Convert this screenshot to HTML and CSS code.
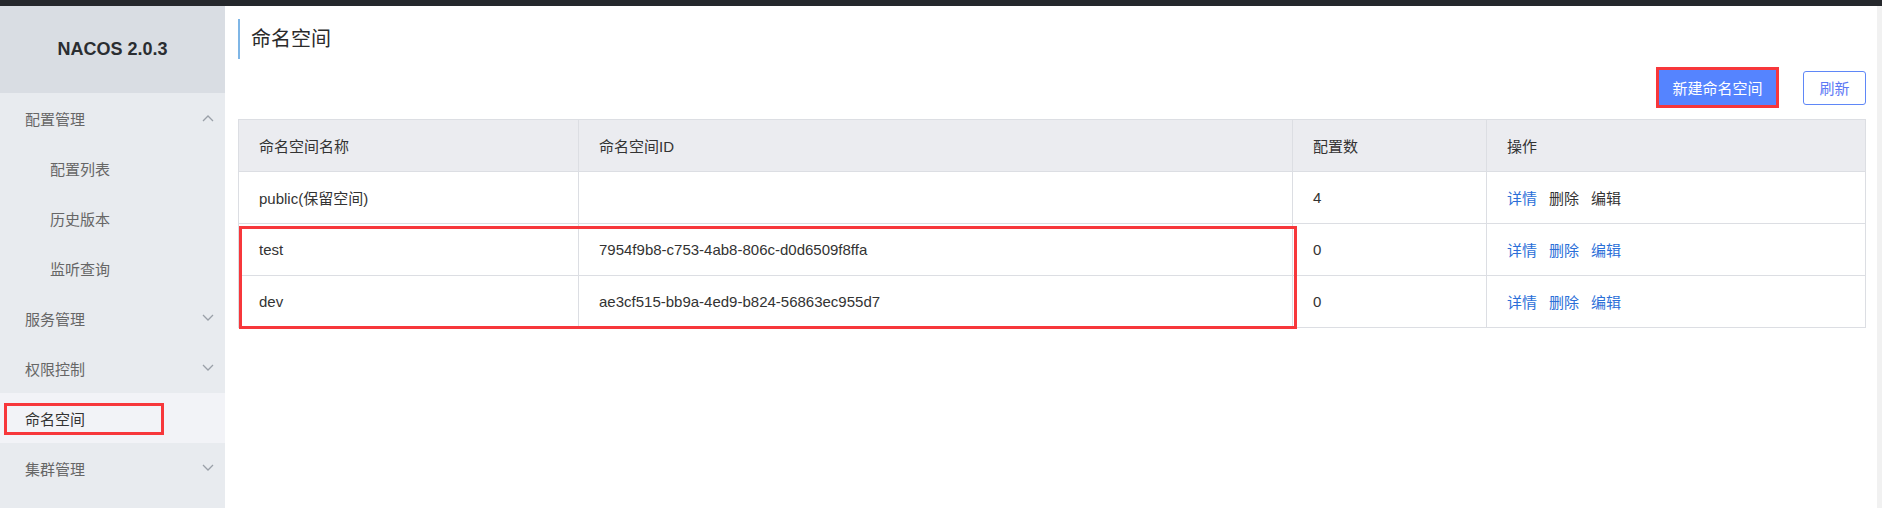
FILE: index.html
```html
<!DOCTYPE html>
<html lang="zh-CN">
<head>
<meta charset="utf-8">
<title>命名空间 - NACOS</title>
<link rel="stylesheet" href="styles.css">
</head>
<body>
<div class="topbar"></div>
<div class="layout">
  <aside class="sidebar">
    <div class="brand">NACOS 2.0.3</div>
    <ul class="menu">
      <li class="menu-item"><span>配置管理</span>
        <svg class="chev" width="12" height="8" viewBox="0 0 12 8"><polyline points="1,7 6,2 11,7" fill="none" stroke="#9aa0a8" stroke-width="1.3"/></svg>
      </li>
      <li class="menu-item sub">配置列表</li>
      <li class="menu-item sub">历史版本</li>
      <li class="menu-item sub">监听查询</li>
      <li class="menu-item"><span>服务管理</span>
        <svg class="chev" width="12" height="8" viewBox="0 0 12 8"><polyline points="1,1 6,6 11,1" fill="none" stroke="#9aa0a8" stroke-width="1.3"/></svg>
      </li>
      <li class="menu-item"><span>权限控制</span>
        <svg class="chev" width="12" height="8" viewBox="0 0 12 8"><polyline points="1,1 6,6 11,1" fill="none" stroke="#9aa0a8" stroke-width="1.3"/></svg>
      </li>
      <li class="menu-item active"><span>命名空间</span><span class="mark mark-menu"></span></li>
      <li class="menu-item"><span>集群管理</span>
        <svg class="chev" width="12" height="8" viewBox="0 0 12 8"><polyline points="1,1 6,6 11,1" fill="none" stroke="#9aa0a8" stroke-width="1.3"/></svg>
      </li>
    </ul>
  </aside>
  <main class="main">
    <h1 class="page-title">命名空间</h1>
    <div class="toolbar">
      <button class="btn btn-primary">新建命名空间</button>
      <button class="btn btn-normal">刷新</button>
    </div>
    <div class="table-wrap">
      <div class="table">
        <div class="cell th">命名空间名称</div>
        <div class="cell th">命名空间ID</div>
        <div class="cell th">配置数</div>
        <div class="cell th">操作</div>

        <div class="cell">public(保留空间)</div>
        <div class="cell"></div>
        <div class="cell">4</div>
        <div class="cell ops"><span class="link">详情</span><span class="plain">删除</span><span class="plain">编辑</span></div>

        <div class="cell">test</div>
        <div class="cell">7954f9b8-c753-4ab8-806c-d0d6509f8ffa</div>
        <div class="cell">0</div>
        <div class="cell ops"><span class="link">详情</span><span class="link">删除</span><span class="link">编辑</span></div>

        <div class="cell">dev</div>
        <div class="cell">ae3cf515-bb9a-4ed9-b824-56863ec955d7</div>
        <div class="cell">0</div>
        <div class="cell ops"><span class="link">详情</span><span class="link">删除</span><span class="link">编辑</span></div>
      </div>
      <div class="mark mark-rows"></div>
    </div>
  </main>
  <div class="scrolltrack"></div>
</div>
</body>
</html>
```

FILE: styles.css
```css
* { box-sizing: border-box; }
html, body { margin: 0; padding: 0; }
body {
  font-family: "Liberation Sans", "Noto Sans CJK SC", sans-serif;
  font-size: 15px;
  color: #333;
  background: #fff;
  overflow: hidden;
  height: 508px;
}
.topbar { height: 6px; background: #25282c; }
.layout { display: flex; height: 502px; }

.sidebar { width: 225px; flex-shrink: 0; background: #e8ebef; }
.brand {
  height: 87px;
  background: #d9dde3;
  display: flex;
  align-items: center;
  justify-content: center;
  font-weight: bold;
  font-size: 18px;
  color: #2a2d31;
}
.menu { list-style: none; margin: 0; padding: 0; }
.menu-item {
  position: relative;
  height: 50px;
  display: flex;
  align-items: center;
  justify-content: space-between;
  padding: 0 11px 0 25px;
  color: #666;
}
.menu-item.sub { padding-left: 50px; }
.menu-item.active { background: #f2f3f7; color: #333; }
.chev { display: block; }

.mark { position: absolute; border: 3px solid #f7373b; pointer-events: none; }
.mark-menu { left: 4px; top: 10px; width: 160px; height: 32px; }

.main { flex: 1; padding: 13px 11px 0 13px; min-width: 0; }
.page-title {
  margin: 0;
  height: 40px;
  line-height: 40px;
  border-left: 2px solid #7fb6e6;
  padding-left: 11px;
  font-size: 20px;
  font-weight: normal;
  color: #2b2b2b;
}
.toolbar {
  margin-top: 11px;
  height: 35px;
  display: flex;
  justify-content: flex-end;
  align-items: center;
  gap: 27px;
}
.btn {
  font-family: inherit;
  font-size: 15px;
  cursor: pointer;
  padding: 0;
}
.btn-primary {
  width: 117px;
  height: 35px;
  background: #5584ff;
  color: #fff;
  border: none;
  outline: 3px solid #f7373b;
}
.btn-normal {
  width: 63px;
  height: 34px;
  background: #fff;
  color: #5d79f5;
  border: 1px solid #5f87f7;
  border-radius: 3px;
}

.table-wrap { position: relative; margin-top: 14px; }
.table {
  display: grid;
  grid-template-columns: 340px 714px 194px 1fr;
  border-top: 1px solid #dcdee3;
  border-left: 1px solid #dcdee3;
}
.cell {
  height: 52px;
  padding-left: 20px;
  display: flex;
  align-items: center;
  border-right: 1px solid #dcdee3;
  border-bottom: 1px solid #dcdee3;
  color: #333;
  white-space: nowrap;
}
.th { background: #ebecf0; }
.ops { gap: 12px; }
.link { color: #2b6fd8; }
.plain { color: #333; }
.mark-rows { left: 1px; top: 107px; width: 1058px; height: 103px; }

.scrolltrack { width: 5px; flex-shrink: 0; background: #f1f1f1; }
```
